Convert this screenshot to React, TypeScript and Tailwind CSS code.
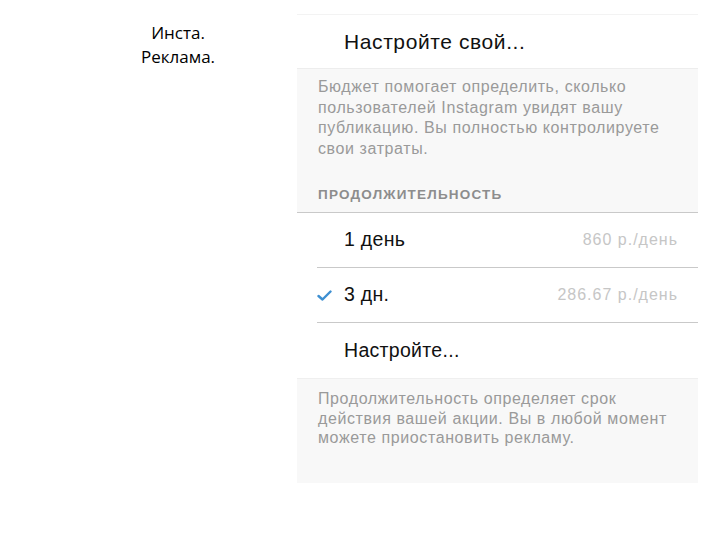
import React from 'react'

const font = { fontFamily: '"Liberation Sans", Arial, sans-serif' }

export default function App() {
  return (
    <div className="w-[720px] h-[540px] bg-white flex items-start" style={font}>
      <div className="w-[120px] ml-[118px] mt-[21px] text-center text-[17px] leading-[24px] text-black" style={{ fontFamily: '"Open Sans", Lato, sans-serif' }}>
        Инста.
        <br />
        Реклама.
      </div>

      <section className="w-[401px] ml-[59px] mt-[14px] flex flex-col">
        <div className="h-[54px] border-t border-[#f3f3f3] flex items-center pl-[47px] text-[21px] tracking-[0.6px] text-[#111]">
          Настройте свой...
        </div>

        <div className="bg-[#f8f8f8] border-t border-[#ededed] border-b border-b-[#c9c9c9] pl-[21px] pr-[24px] pt-[8px] h-[145px]">
          <p className="text-[16px] leading-[20.5px] tracking-[0.6px] text-[#9a9a9a]">
            Бюджет помогает определить, сколько пользователей Instagram увидят вашу публикацию. Вы полностью контролируете свои затраты.
          </p>
          <p className="mt-[26px] text-[13.5px] font-bold tracking-[1.2px] text-[#8d8d8d]">ПРОДОЛЖИТЕЛЬНОСТЬ</p>
        </div>

        <DurationRow label="1 день" price="860 р./день" />
        <DurationRow label="3 дн." price="286.67 р./день" checked />
        <DurationRow label="Настройте..." last />

        <div className="bg-[#f8f8f8] border-t border-[#efefef] h-[105px] pl-[21px] pr-[24px] pt-[10px]">
          <p className="text-[16px] leading-[19.5px] tracking-[0.6px] text-[#9a9a9a]">
            Продолжительность определяет срок действия вашей акции. Вы в любой момент можете приостановить рекламу.
          </p>
        </div>
      </section>
    </div>
  )
}

const DurationRow = ({ label, price, checked, last }: { label: string; price?: string; checked?: boolean; last?: boolean }) => {
  return (
    <div className="pl-[20px] h-[55px]">
      <div className={`h-full flex items-center pr-[20px] ${last ? '' : 'border-b border-[#c9c9c9]'}`}>
        <div className="w-[27px] flex items-center">
          {checked && (
            <svg width="15" height="11" viewBox="0 0 15 11" className="mt-[1px]">
              <path d="M1.5 6 L5.5 9.5 L13.5 1.5" fill="none" stroke="#3d8fd1" strokeWidth="2.4" strokeLinecap="round" strokeLinejoin="round" />
            </svg>
          )}
        </div>
        <span className="text-[19.5px] tracking-[0.3px] text-[#111]">{label}</span>
        {price && <span className="ml-auto text-[16px] tracking-[1px] text-[#c6c6c6]">{price}</span>}
      </div>
    </div>
  )
}
